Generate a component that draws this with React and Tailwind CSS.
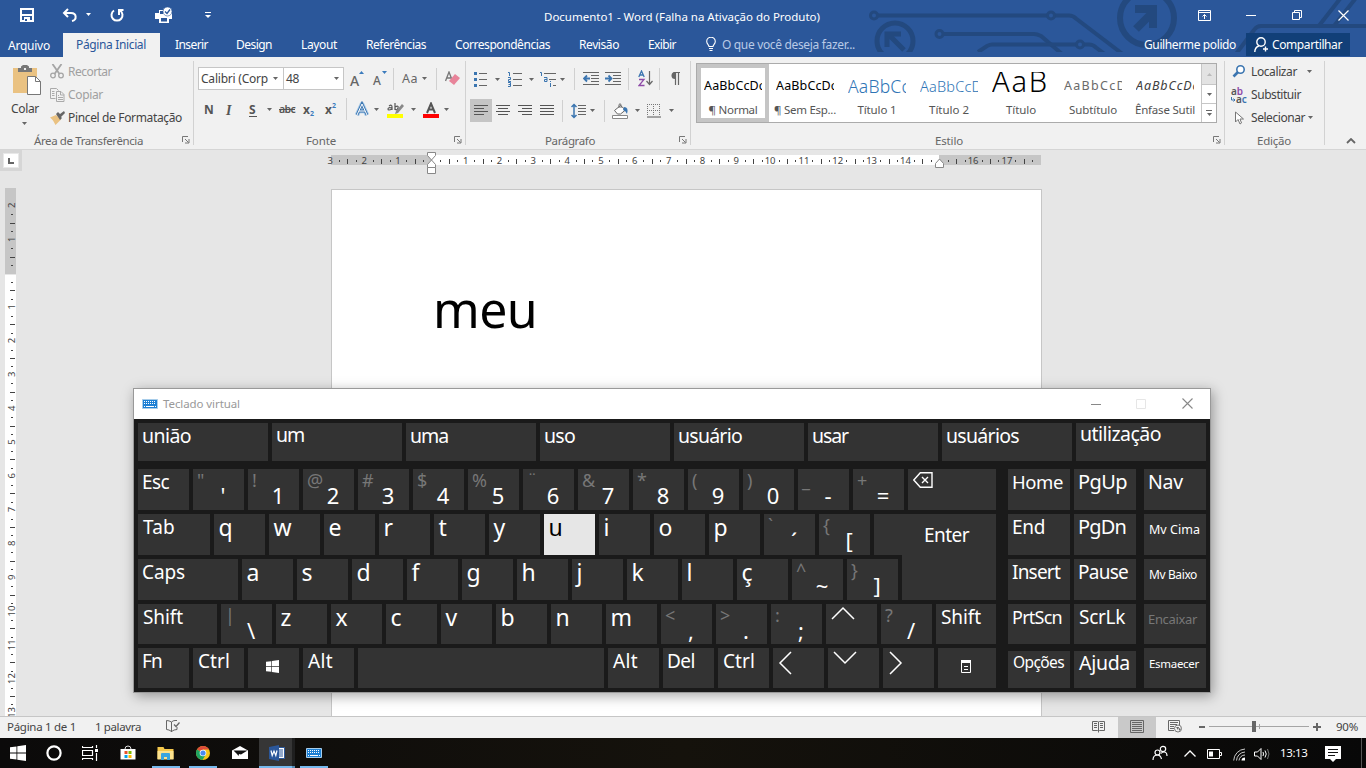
import React, { useLayoutEffect, useRef } from "react";

/* Text run tracked so that it takes up exactly `w` pixels. */
function T({ w, c = "", children }) {
  const ref = useRef(null);
  useLayoutEffect(() => {
    const el = ref.current;
    if (!w || !el) return;
    el.style.letterSpacing = "0px";
    const natural = el.getBoundingClientRect().width;
    el.style.letterSpacing = `${(w - natural) / el.textContent.length}px`;
  }, [w, children]);
  return (
    <span ref={ref} className={`inline-block shrink-0 whitespace-pre ${c}`}>
      {children}
    </span>
  );
}

const S = ({ w, h, c = "", children }) => (
  <svg width={w} height={h} viewBox={`0 0 ${w} ${h}`} fill="none" className={`block shrink-0 ${c}`}>
    {children}
  </svg>
);

const Dn = ({ c = "", f = "#666" }) => (
  <S w={5} h={3} c={c}>
    <path d="M0 0h5L2.500 3z" fill={f} />
  </S>
);
const Sep = ({ c = "" }) => <div className={`w-px h-[22px] shrink-0 bg-[#d0d0d0] ${c}`} />;
const Launcher = ({ c = "" }) => (
  <S w={8} h={8} c={c}>
    <path d="M.5 6V.5H6M3 3l3.500 3.500M7 3v4H3" stroke="#777" />
  </S>
);

/* ---------- title bar and tabs ---------- */
function Circuit() {
  return (
    <svg width="498" height="52" viewBox="868 0 498 52" fill="none" stroke="#23497f" strokeWidth="4" className="absolute left-[868px] top-0">
      <circle cx="874" cy="15.500" r="3.500" strokeWidth="3" />
      <path d="M878 15.500h169M1055 15.500h14c3 0 5 1 7 3l46 35" />
      <circle cx="1051" cy="15.500" r="3.500" strokeWidth="3" />
      <circle cx="895" cy="41" r="18" strokeWidth="5" />
      <path d="M904 50l-15-15M887 47V34h14" strokeWidth="5" />
      <circle cx="939.500" cy="34" r="3.500" strokeWidth="3" />
      <path d="M943 34h91c3 0 5 1 7 2l21 18" />
      <path d="M978 52l9-6c2-1 3-1.500 5-1.500h85M1084 44.500h5c3 0 5 1 7 3l8 6" />
      <circle cx="1080" cy="44.500" r="3.500" strokeWidth="3" />
      <circle cx="1147" cy="18" r="27" strokeWidth="6" />
      <path d="M1136 29l18-18M1135 9h18v19" strokeWidth="8" />
      <path d="M1236 54l18-24c2-3 4-4 7-4h105M1318 27l25-32M1334 26l25-32" />
    </svg>
  );
}

const TABS = [
  ["Inserir", 33, "ml-[15px]"],
  ["Design", 36, "ml-[28px]"],
  ["Layout", 36, "ml-[29px]"],
  ["Referências", 60, "ml-[29px]"],
  ["Correspondências", 95, "ml-[29px]"],
  ["Revisão", 40, "ml-[29px]"],
  ["Exibir", 28, "ml-[29px]"],
];

function Header() {
  return (
    <header className="relative h-[57px] shrink-0 bg-[#2b579a] text-white text-[12px]">
      <Circuit />
      <div className="relative flex h-[33px] items-center">
        <S w={14} h={14} c="ml-[20px] -mt-[3px]">
          <path d="M1 1h12v12H1z" stroke="#fff" strokeWidth="2" />
          <path d="M1 6h12v2H1zM4 9h6v5H4z" fill="#fff" />
          <path d="M5 11h2v2H5z" fill="#2b579a" />
        </S>
        <S w={16} h={14} c="ml-[28px] -mt-[3px]">
          <path d="M6 1L2 5l4 4M2 5h7c6 0 6 7 1 8" stroke="#fff" strokeWidth="2" />
        </S>
        <Dn f="#fff" c="ml-[8px] -mt-[4px]" />
        <S w={14} h={14} c="ml-[19px] -mt-[3px]">
          <path d="M4 2.500A5.500 5.500 0 1 0 10 2.500M9 7V2h4.500" stroke="#fff" strokeWidth="2" />
        </S>
        <S w={18} h={17} c="ml-[31px] -mt-[3px]">
          <path d="M0 6h4v-3h4v3h9v6h-3v4H4v-4H0z" fill="#fff" />
          <path d="M6 11h6v3.500H6zM5 4h3v3H5z" fill="#2b579a" />
          <circle cx="12.500" cy="4.500" r="4.500" fill="#fff" stroke="#2b579a" strokeWidth=".6" />
          <path d="M10 4.500l2 2 3-4" stroke="#2b579a" strokeWidth="1.300" />
        </S>
        <S w={6} h={7} c="ml-[32px] -mt-[2px]">
          <path d="M0 .5h6" stroke="#fff" />
          <path d="M0 3h6L3 6z" fill="#fff" />
        </S>
        <T w={276} c="ml-[333px] text-[11.500px]">Documento1 - Word (Falha na Ativação do Produto)</T>
        <S w={13} h={11} c="ml-[378px] -mt-[3px]">
          <path d="M.5 .5h12v10H.5zM.5 2.500h12M6.500 9V4.500M4.500 6.500l2-2 2 2" stroke="#fff" />
        </S>
        <S w={10} h={1} c="ml-[35px] -mt-[2px]"><path d="M0 .5h10" stroke="#fff" /></S>
        <S w={10} h={10} c="ml-[36px] -mt-[3px]">
          <path d="M.5 2.500h7v7h-7zM2.500 2V.5h7v7H8" stroke="#fff" />
        </S>
        <S w={11} h={11} c="ml-[36px] -mt-[2px]"><path d="M.5 .5l10 10M10.500 .5l-10 10" stroke="#fff" strokeWidth="1.200" /></S>
      </div>
      <div className="relative flex h-[24px] items-center">
        <T w={42} c="ml-[8px] mt-[2px]">Arquivo</T>
        <div className="ml-[13px] flex h-[24px] w-[97px] items-center bg-[#f1f1f1] pl-[13px] text-[#2b579a]">
          <T w={70}>Página Inicial</T>
        </div>
        {TABS.map(([t, w, c]) => <T key={t} w={w} c={c}>{t}</T>)}
        <S w={10} h={14} c="ml-[30px] -mt-[2px]">
          <path d="M3 9.500C3 8 .7 7 .7 4.500a4.200 4.200 0 0 1 8.600 0C9.300 7 7 8 7 9.500zM3 11.500h4M3.500 13.500h3" stroke="#fff" strokeWidth="1.100" />
        </S>
        <T w={133} c="ml-[6px] text-[#b9cae6]">O que você deseja fazer...</T>
        <T w={92} c="ml-[289px]">Guilherme polido</T>
        <div className="ml-[10px] mb-px flex h-[23px] w-[104px] items-center bg-[#113f78] pl-[8px]">
          <S w={14} h={16}>
            <circle cx="7" cy="5" r="4.200" stroke="#fff" strokeWidth="1.400" />
            <path d="M.8 15c0-3 1.500-5 4-6M9 12h5M11.500 9.500v5" stroke="#fff" strokeWidth="1.400" />
          </S>
          <T w={70} c="ml-[4px] mt-px">Compartilhar</T>
        </div>
      </div>
    </header>
  );
}

/* ---------- ribbon ---------- */
const Label = ({ pl, w, lp, children }) => (
  <div className="flex h-[18px] items-center">
    <T w={w} c={`${pl} text-[11.500px] leading-[16px] mt-px text-[#666]`}>{children}</T>
    {lp && <Launcher c={lp} />}
  </div>
);
const Rule = () => <div className="mt-[4px] h-[84px] w-px shrink-0 bg-[#d2d2d2]" />;

function Clipboard() {
  return (
    <section className="flex w-[193px] flex-col">
      <div className="flex h-[75px]">
        <div className="w-[50px] shrink-0 pl-[11px] pt-[8px]">
          <S w={30} h={30} c="ml-[2px]">
            <path d="M0 3h24v25H0z" fill="#eac282" />
            <path d="M5 3h3V1.500L10 0h4l2 1.500V3h3v4H5z" fill="#777" />
            <path d="M11 3h2v2h-2z" fill="#eee" />
            <path d="M14.500 11.500h8l5 5v13h-13z" fill="#fff" stroke="#777" />
            <path d="M22.500 11.500v5h5" stroke="#777" />
          </S>
          <T w={28} c="-mt-[2px] text-[12px] leading-[20px] text-[#444]">Colar</T>
          <Dn c="ml-[11px] mt-[3px]" />
        </div>
        <div className="flex flex-col pt-[3px] text-[12px] leading-[23px]">
          <div className="flex h-[23px] items-center text-[#a0a0a0]">
            <S w={14} h={15} c="mr-[4px]">
              <path d="M2.500 0l7 10M11.500 0l-7 10" stroke="#a5a5a5" strokeWidth="1.800" />
              <circle cx="3" cy="11.500" r="2.300" stroke="#a5a5a5" strokeWidth="1.300" />
              <circle cx="11" cy="11.500" r="2.300" stroke="#a5a5a5" strokeWidth="1.300" />
            </S>
            <T w={44}>Recortar</T>
          </div>
          <div className="flex h-[23px] items-center text-[#a0a0a0]">
            <S w={15} h={14} c="mr-[3px]">
              <path d="M5.500 10.500H.5V.5h6L8.500 2.500M2 3.500h2.500M2 5.500h2.500M2 7.500h2.500M6.500 3.500h4.500l3 3v7H6.500zM10.500 3.500v3.500h3.500M8 7.500h1M8 9.500h5M8 11.500h5" stroke="#aaa" />
            </S>
            <T w={35}>Copiar</T>
          </div>
          <div className="flex h-[23px] items-center text-[#444]">
            <S w={15} h={14} c="mr-[3px]">
              <path d="M0 6.500L6 4l5 4.500-5.500 5.500C4 11 3 9 0 6.500z" fill="#eac282" />
              <path d="M6 3l2-2 2 2 4-3 1 2-4 4 1 1-2 2z" fill="#666" />
            </S>
            <T w={114}>Pincel de Formatação</T>
          </div>
        </div>
      </div>
      <Label pl="ml-[34px]" w={109} lp="ml-[39px]">Área de Transferência</Label>
    </section>
  );
}

function FontGroup() {
  return (
    <section className="flex w-[271px] flex-col">
      <div className="flex h-[34px] items-end pl-[4px] text-[#666]">
        <div className="flex h-[23px] w-[86px] items-center border border-[#c6c6c6] bg-white pl-[2px]">
          <T w={67} c="text-[12px] text-[#444]">Calibri (Corp</T>
          <Dn c="ml-[5px]" />
        </div>
        <div className="flex h-[23px] w-[60px] items-center border border-l-0 border-[#c6c6c6] bg-white pl-[2px]">
          <T w={13} c="text-[12px] text-[#444]">48</T>
          <Dn c="ml-[35px]" />
        </div>
        <div className="flex h-[23px] items-center">
          <T w={9} c="ml-[6px] mt-[4px] text-[14px] font-medium">A</T>
          <Dn c="mb-[12px] rotate-180" f="#3b7bbd" />
          <T w={8} c="ml-[9px] mt-[5px] text-[12px] font-medium">A</T>
          <Dn c="mb-[12px] ml-[1px]" f="#3b7bbd" />
          <Sep c="ml-[6px]" />
          <T w={16} c="ml-[8px] text-[12.500px]">Aa</T>
          <Dn c="ml-[4px]" />
          <Sep c="ml-[9px]" />
          <S w={15} h={15} c="ml-[8px] -mt-px">
            <path d="M.5 10L4 1l3.500 9M1.500 7h5" stroke="#777" strokeWidth="1.300" />
            <path d="M10 3l5 4-6 7-5-4z" fill="#e8849a" />
          </S>
        </div>
      </div>
      <div className="mt-[8px] flex h-[22px] items-center text-[#555]">
        <T w={9} c="ml-[10px] mt-[2px] text-[12px] font-bold">N</T>
        <T w={7} c="ml-[13px] mt-[2px] font-['Liberation_Serif'] text-[14px] font-bold italic">I</T>
        <T w={8} c="ml-[16px] mt-[2px] text-[12px] font-bold underline underline-offset-2">S</T>
        <Dn c="ml-[10px]" />
        <T w={16} c="ml-[7px] mt-px text-[10.500px] font-semibold line-through">abc</T>
        <T w={7} c="ml-[8px] mt-px text-[12px] font-bold">x</T>
        <T w={5} c="mt-[9px] text-[7px] font-bold text-[#3b7bbd]">2</T>
        <T w={7} c="ml-[10px] mt-px text-[12px] font-bold">x</T>
        <T w={5} c="-mt-[7px] text-[7px] font-bold text-[#3b7bbd]">2</T>
        <Sep c="ml-[9px]" />
        <S w={16} h={16} c="ml-[7px] -mt-px">
          <path d="M3 14L8 3l5 11M5 10h6" stroke="#a9cbe9" strokeWidth="4.500" strokeLinejoin="round" />
          <path d="M3 14L8 3l5 11M5 10h6" stroke="#3b75b0" strokeWidth="2.800" />
          <path d="M3 14L8 3l5 11M5 10h6" stroke="#fff" strokeWidth="1" />
        </S>
        <Dn c="ml-[4px]" />
        <S w={17} h={16} c="ml-[8px] mt-px">
          <path d="M2 4q3-2 3 1v3M5 6q-4-1-4 1t4 0M8 1v7M8 5q4-2 3 1t-3 1" stroke="#555" strokeWidth="1.200" />
          <path d="M15 2L9 9l-1 3 3-1 6-7z" fill="#888" />
          <path d="M0 12h16v4H0z" fill="#ff0" />
        </S>
        <Dn c="ml-[7px]" />
        <S w={16} h={16} c="ml-[7px] mt-px">
          <path d="M4 11L8 1.500 12 11M5.500 7.500h5" stroke="#555" strokeWidth="2" />
          <path d="M0 12h16v4H0z" fill="red" />
        </S>
        <Dn c="ml-[5px]" />
      </div>
      <div className="h-[11px]" />
      <Label pl="ml-[112px]" w={30} lp="ml-[118px]">Fonte</Label>
    </section>
  );
}

const LINES = {
  left: "M0 .5h14M0 3.500h10M0 6.500h14M0 9.500h10",
  center: "M0 .5h14M2 3.500h10M0 6.500h14M2 9.500h10",
  right: "M0 .5h14M4 3.500h10M0 6.500h14M4 9.500h10",
  full: "M0 .5h14M0 3.500h14M0 6.500h14M0 9.500h14",
};
const Align = ({ k, c = "" }) => (
  <S w={14} h={11} c={c}><path d={LINES[k]} stroke="#555" /></S>
);
const Indent = ({ out, c }) => (
  <S w={16} h={13} c={c}>
    <path d="M0 .5h16M8 3.500h8M8 6.500h8M8 9.500h8M0 12.500h16" stroke="#666" />
    <path d={out ? "M7 6.500H1.500M4 3.500l-3 3 3 3" : "M0 6.500h6M3.500 3.500l3 3-3 3"} stroke="#3b75b0" strokeWidth="1.800" />
  </S>
);

function Paragraph() {
  return (
    <section className="flex w-[224px] flex-col">
      <div className="mt-[11px] flex h-[22px] items-center">
        <S w={13} h={16} c="ml-[8px] -mt-px">
          <path d="M0 1h3v3H0zM0 7h3v3H0zM0 13h3v3H0z" fill="#3b75b0" />
          <path d="M5 2.500h8M5 8.500h8M5 14.500h8" stroke="#666" />
        </S>
        <Dn c="ml-[8px]" />
        <S w={14} h={16} c="ml-[8px] -mt-px">
          <path d="M0 1.500h1.500V5M0 6.500h2.500v2H.5v2H3M0 11.500h2.500v4H0M.5 13.500h2" stroke="#3b75b0" />
          <path d="M5 2.500h9M5 8.500h9M5 14.500h9" stroke="#666" />
        </S>
        <Dn c="ml-[7px]" />
        <S w={16} h={16} c="ml-[6px] -mt-px">
          <path d="M0 1.500h1.500V5M4 6.500h3v4H4.500v-2H7M10.500 10v1M10.500 12v4" stroke="#3b75b0" />
          <path d="M4 2.500h12M9 8.500h7M13 14.500h3" stroke="#666" />
        </S>
        <Dn c="ml-[4px]" />
        <Sep c="ml-[9px]" />
        <Indent out c="ml-[8px] -mt-[2px]" />
        <Indent c="ml-[6px] -mt-[2px]" />
        <Sep c="ml-[7px]" />
        <S w={15} h={17} c="ml-[9px] -mt-px">
          <path d="M.8 7L3.500 1l2.700 6M1.500 5h4" stroke="#3b75b0" strokeWidth="1.300" />
          <path d="M1 9.500h5L1 15.500h5.500" stroke="#8e4ba8" strokeWidth="1.300" />
          <path d="M11.500 1v13M8.500 11l3 3.500 3-3.500" stroke="#666" strokeWidth="1.200" />
        </S>
        <Sep c="ml-[6px]" />
        <S w={10} h={13} c="ml-[10px] -mt-px">
          <path d="M3.500 .5H10M5.500 0v13M8.500 0v13" stroke="#666" strokeWidth="1.200" />
          <path d="M5 0a3.500 3.500 0 0 0 0 7z" fill="#666" />
        </S>
      </div>
      <div className="mt-[9px] flex h-[23px] items-center">
        <div className="ml-[4px] flex h-[23px] w-[22px] items-center justify-center bg-[#c5c5c5]">
          <Align k="left" />
        </div>
        <Align k="center" c="ml-[4px]" />
        <Align k="right" c="ml-[8px]" />
        <Align k="full" c="ml-[8px]" />
        <Sep c="ml-[8px]" />
        <S w={15} h={16} c="ml-[8px]">
          <path d="M3 1v14M.5 4L3 1.500 5.500 4M.5 12L3 14.500 5.500 12" stroke="#3b75b0" strokeWidth="1.500" />
          <path d="M7 2.500h8M7 5.500h8M7 8.500h8M7 11.500h8" stroke="#666" />
        </S>
        <Dn c="ml-[4px]" />
        <Sep c="ml-[9px]" />
        <S w={17} h={16} c="ml-[7px]">
          <path d="M2.500 7.500l6-5 5 4.500-5 4H5.500zM7 5V1.500q1-1.500 2 0v3.500" stroke="#666" fill="#fff" />
          <path d="M12 4q5 0 3 7-1-3-4-4z" fill="#3b75b0" />
          <path d="M.5 12.500h15v3H.5z" fill="#fff" stroke="#888" />
        </S>
        <Dn c="ml-[6px]" />
        <S w={14} h={14} c="ml-[7px]">
          <path d="M.5 0v12M6.500 0v12M12.500 0v12M0 .5h13M0 6.500h13" stroke="#777" strokeDasharray="1 1" />
          <path d="M0 13h14" stroke="#555" />
        </S>
        <Dn c="ml-[8px]" />
      </div>
      <div className="h-[10px]" />
      <Label pl="ml-[79px]" w={50} lp="ml-[84px]">Parágrafo</Label>
    </section>
  );
}

const STYLES = [
  ["AaBbCcDc", 61, "text-[12.500px] text-black", "¶ Normal", 49],
  ["AaBbCcDc", 61, "text-[12.500px] text-black", "¶ Sem Esp...", 62],
  ["AaBbCc", 62, "text-[17.500px] font-light text-[#2e74b5]", "Título 1", 39],
  ["AaBbCcD", 62, "text-[14.500px] font-light text-[#2e74b5]", "Título 2", 40],
  ["AaB", 57, "text-[29px] font-light text-black", "Título", 30],
  ["AaBbCcD", 63, "text-[12.500px] text-[#6a6a6a]", "Subtítulo", 48],
  ["AaBbCcDc", 63, "text-[12.500px] italic text-[#404040]", "Ênfase Sutil", 60],
];

function StylesGroup() {
  return (
    <section className="flex w-[533px] flex-col">
      <div className="ml-[5px] mt-[6px] flex h-[60px] w-[521px] border border-[#ababab] bg-white">
        {STYLES.map(([s, sw, c, l, lw], i) => (
          <div key={l} className={`flex w-[72px] shrink-0 flex-col items-center border-4 ${i === 0 ? "border-[#c5c5c5]" : "border-transparent"}`}>
            <div className="mt-[4px] flex h-[26px] w-[58px] shrink-0 items-center overflow-hidden">
              <T w={sw} c={`${c} ${s === "AaB" ? "-mt-[9px]" : "mt-[2px]"} leading-[26px]`}>{s}</T>
            </div>
            <T w={lw} c="mt-[4px] text-[11.500px] leading-[16px] text-[#555]">{l}</T>
          </div>
        ))}
        <div className="flex flex-1 flex-col border-l border-[#c6c6c6]">
          <div className="flex h-[20px] items-center justify-center bg-[#e3e3e3]"><Dn c="rotate-180" f="#bbb" /></div>
          <div className="flex h-[20px] items-center justify-center border-y border-[#c6c6c6]"><Dn /></div>
          <div className="flex flex-1 flex-col items-center justify-center gap-[2px]"><div className="h-px w-[6px] bg-[#666]" /><Dn /></div>
        </div>
      </div>
      <div className="h-[9px]" />
      <Label pl="ml-[244px]" w={28} lp="ml-[250px]">Estilo</Label>
    </section>
  );
}

function Editing() {
  return (
    <section className="flex w-[99px] flex-col text-[12px] text-[#444]">
      <div className="flex h-[75px] flex-col pl-[7px] pt-[3px]">
        <div className="flex h-[23px] items-center">
          <S w={14} h={13} c="mr-[5px]">
            <circle cx="8.500" cy="4.500" r="3.700" stroke="#3b75b0" strokeWidth="1.600" fill="#fff" />
            <path d="M6 7l-4.500 4.500" stroke="#3b75b0" strokeWidth="2.600" />
          </S>
          <T w={46}>Localizar</T>
          <Dn c="ml-[10px]" />
        </div>
        <div className="flex h-[23px] items-center">
          <div className="-ml-[1px] mr-[3px] flex w-[17px] flex-col text-[10px] font-semibold leading-[8px]">
            <span className="text-[#555]">a<span className="text-[#8e4ba8]">b</span></span>
            <span className="flex items-center gap-px whitespace-nowrap text-[#555]">
              <S w={4} h={5} c="mt-[2px]"><path d="M.5 0v3H4M2.500 1.500L4 3 2.500 4.500" stroke="#3b75b0" /></S>
              <span>a<span className="text-[#3b75b0]">c</span></span>
            </span>
          </div>
          <T w={50}>Substituir</T>
        </div>
        <div className="flex h-[23px] items-center">
          <S w={14} h={14} c="mr-[5px]">
            <path d="M3.500 1v10l2.500-2.500 2 4.500 1.500-1-1.500-4h3.500z" stroke="#777" fill="#fff" />
          </S>
          <T w={54}>Selecionar</T>
          <Dn c="ml-[3px]" />
        </div>
      </div>
      <Label pl="ml-[32px]" w={34}>Edição</Label>
    </section>
  );
}

/* ---------- document area ---------- */
const CM = 33.83;
function HRuler() {
  const z = 100.8;
  const parts = [];
  for (let i = -3; i <= 17; i++) {
    const x = z + i * CM;
    if (i !== 0 && i !== 15)
      parts.push(<text key={"n" + i} x={x} y="8.500" textAnchor="middle" className="text-[9.500px]">{Math.abs(i)}</text>);
    [0.25, 0.5, 0.75].forEach((f) => {
      const tx = Math.round(x + f * CM);
      const mid = f === 0.5;
      if (tx < 708) parts.push(<rect key={i + "t" + f} x={tx} y={mid ? 4 : 5} width="1" height={mid ? 5 : 2} />);
    });
  }
  return (
    <svg width="720" height="22" viewBox="-5 -2 720 22" fill="#444" className="block max-w-none shrink-0 overflow-visible">
      <rect x="0" y="0" width="101" height="10" fill="#c6c6c6" />
      <rect x="101" y="0" width="507" height="10" fill="#fff" />
      <rect x="608" y="0" width="102" height="10" fill="#c6c6c6" />
      {parts}
      <path d="M96.500 -2.500h8v3l-4 4.500 4 4.500v3h-8v-3l4-4.500-4-4.500z" fill="#fff" stroke="#888" />
      <path d="M96.500 12.500h8v6h-8z" fill="#fff" stroke="#888" />
      <path d="M604.500 12.500v-4l4-4.500 4 4.500v4z" fill="#fff" stroke="#888" />
    </svg>
  );
}

function VRuler() {
  const parts = [];
  for (let i = -2; i <= 13; i++) {
    const y = 85.5 + i * 33.8;
    if (i !== 0)
      parts.push(<text key={"n" + i} x="0" y="0" transform={`translate(10 ${y - 0.5}) rotate(-90)`} textAnchor="middle" className="text-[9.500px]">{Math.abs(i)}</text>);
    [0.25, 0.5, 0.75].forEach((f) => {
      const ty = Math.round(y + f * CM);
      const mid = f === 0.5;
      parts.push(<rect key={i + "t" + f} x={mid ? 5 : 6} y={ty} width={mid ? 5 : 2} height="1" />);
    });
  }
  return (
    <svg width="12" height="528" viewBox="0 0 12 528" fill="#444" className="ml-[5px] mt-[17px] block">
      <rect width="11" height="86" fill="#c6c6c6" />
      <rect y="87" width="11" height="441" fill="#fff" />
      {parts}
    </svg>
  );
}

function Document() {
  return (
    <main className="flex h-[566px] shrink-0 overflow-hidden bg-[#e6e6e6]">
      <div className="flex w-[326px] shrink-0 flex-col">
        <div className="flex h-[21px] w-[22px] items-center justify-center bg-[#d6d6d6]">
          <div className="flex h-[15px] w-[16px] items-center justify-center border border-[#e8e8e8] bg-white">
            <S w={6} h={6}><path d="M1 0v5h5" stroke="#666" strokeWidth="2" /></S>
          </div>
        </div>
        <VRuler />
      </div>
      <div className="flex flex-col pt-[3px]">
        <HRuler />
        <div className="ml-[5px] mt-[14px] h-[540px] w-[711px] shrink-0 border border-[#c6c6c6] bg-white pl-[101px] pt-[83px]">
          <T w={104} c="text-[50px] leading-[72px] text-black">meu</T>
        </div>
      </div>
    </main>
  );
}

/* ---------- status bar ---------- */
function Status() {
  return (
    <footer className="flex h-[22px] shrink-0 items-center border-t border-[#c6c6c6] bg-[#f1f1f1] text-[11.500px] text-[#444]">
      <T w={69} c="ml-[7px] -mt-px">Página 1 de 1</T>
      <T w={46} c="ml-[19px] -mt-px">1 palavra</T>
      <S w={14} h={13} c="ml-[25px] -mt-[2px]">
        <path d="M5.500 2v10M5.500 2Q3 .5.500 .5v9Q3 9.500 5.500 11.500Q8 9.500 11 9.500V7M5.500 2Q7 .5 9 .5h2" stroke="#666" />
        <path d="M8 4.500l2 2 3.500-4" stroke="#666" strokeWidth="1.300" />
      </S>
      <S w={14} h={13} c="ml-[912px] -mt-[3px]">
        <path d="M6.500 1.500v11M.5 1.500h5l1 1 1-1h5v9h-5l-1 1-1-1h-5zM2 3.500h3M2 5.500h3M2 7.500h3M8 3.500h3M8 5.500h3M8 7.500h3" stroke="#666" />
      </S>
      <div className="ml-[12px] flex h-[21px] w-[38px] items-center justify-center bg-[#c9c9c9]">
        <S w={14} h={13} c="-mt-[2px]"><path d="M.5 .5h13v12H.5zM2 2.500h10M2 4.500h10M2 6.500h10M2 8.500h10M2 10.500h10" stroke="#666" /></S>
      </div>
      <S w={14} h={13} c="ml-[12px] -mt-[3px]">
        <path d="M6 10.500H.5V.5h11V5M2 2.500h8M2 4.500h7M2 6.500h4M2 8.500h4" stroke="#666" />
        <circle cx="10" cy="8.500" r="3.500" fill="#f1f1f1" stroke="#777" />
        <path d="M8 7l3 0-1 3zM11 8l2 1-2 2z" fill="#666" />
      </S>
      <div className="ml-[17px] -mt-px h-[2px] w-[6px] bg-[#666]" />
      <div className="-mt-[2px] ml-[4px] flex h-[11px] w-[100px] items-center">
        <div className="h-px w-[43px] bg-[#a5a5a5]" />
        <div className="h-[11px] w-[4px] bg-[#666]" />
        <div className="h-px w-[3px] bg-[#a5a5a5]" />
        <div className="h-[5px] w-px bg-[#a5a5a5]" />
        <div className="h-px flex-1 bg-[#a5a5a5]" />
      </div>
      <S w={8} h={8} c="ml-[4px] -mt-px"><path d="M0 4h8M4 0v8" stroke="#666" strokeWidth="2" /></S>
      <T w={22} c="-mt-px ml-[15px]">90%</T>
    </footer>
  );
}

/* ---------- taskbar ---------- */
const Osk = ({ w = 16, h = 10, c = "" }) => (
  <svg width={w} height={h} viewBox="0 0 16 10" fill="none" className={`block shrink-0 ${c}`}>
    <path d="M.5 .5h15v9H.5z" fill="#1c7fd4" stroke="#a8cdea" />
    <path d="M2 2.500h12M2 4.500h12" stroke="#fff" strokeDasharray="1 1" />
    <path d="M2 7.500h1M4 7.500h8M13 7.500h1" stroke="#fff" />
  </svg>
);
const Slot = ({ w, line, bg = "", children }) => (
  <div className={`flex h-[30px] shrink-0 flex-col items-center ${w} ${bg}`}>
    <div className="flex h-[28px] items-center pt-[2px]">{children}</div>
    <div className={`h-[2px] ${line || ""}`} />
  </div>
);

const WinLogo = ({ s }) => (
  <svg width={s} height={s} viewBox="0 0 16 16" fill="#fff" className="block">
    <path d="M0 2.300l6.500-.9v6.100H0zM7.300 1.300L16 0v7.500H7.300zM0 8.400h6.500v6.200L0 13.700zM7.300 8.400H16V16l-8.700-1.200z" />
  </svg>
);

function Taskbar() {
  return (
    <footer className="flex h-[30px] shrink-0 items-center bg-gradient-to-r from-[#0b0a0a] via-[#15120c] to-[#080808]">
      <Slot w="w-[36px]"><WinLogo s={16} /></Slot>
      <Slot w="w-[36px]"><S w={16} h={16}><circle cx="8" cy="8" r="6.600" stroke="#fff" strokeWidth="2.200" /></S></Slot>
      <Slot w="w-[37px]">
        <S w={16} h={16} c="-ml-px">
          <path d="M.5 1v1.500h10V1M.5 15v-1.500h10V15M.5 5.500h10v5H.5zM14.500 0v3M14.500 8v8" stroke="#fff" strokeWidth="1.200" />
          <path d="M13 4h3v3h-3z" fill="#fff" />
        </S>
      </Slot>
      <Slot w="w-[38px]">
        <S w={16} h={16}>
          <path d="M.5 4h15v10.500h-15z" fill="#fff" />
          <path d="M5 4Q5 1 8 1t3 3" stroke="#ddd" />
          <path d="M4.500 6H7.500v3H4.500z" fill="#e8532b" /><path d="M8.500 6h3v3h-3z" fill="#7fba00" />
          <path d="M4.500 10h3v3h-3z" fill="#00a4ef" /><path d="M8.500 10h3v3h-3z" fill="#ffb900" />
        </S>
      </Slot>
      <Slot w="w-[37px]" line="w-[28px] bg-[#76b9ed]">
        <S w={17} h={15}>
          <path d="M.5 1h6l1 2h9v10H.5z" fill="#f5c84c" /><path d="M.5 5h16v8.500H.5z" fill="#fde28e" />
          <path d="M4 14V8q0-1 1-1h7q1 0 1 1v6h-3v-3H7v3z" fill="#3aa5e0" />
        </S>
      </Slot>
      <Slot w="w-[37px]" line="w-[28px] bg-[#76b9ed]">
        <S w={14} h={14}>
          <circle cx="7" cy="7" r="7" fill="#f7c61c" />
          <path d="M7 7L1 3.500A7 7 0 0 1 13.100 3.600H7z" fill="#dd4b39" />
          <path d="M1 3.500A7 7 0 0 0 6.500 14L9.500 9 7 7z" fill="#1da462" />
          <circle cx="7" cy="7" r="3.300" fill="#fff" /><circle cx="7" cy="7" r="2.600" fill="#4a8af4" />
        </S>
      </Slot>
      <Slot w="w-[38px]">
        <S w={16} h={14}>
          <path d="M0 4.500L8 0l8 4.500v8.500H0z" fill="#fff" />
          <path d="M1.500 4.500h14L9 8.500l-2-.5-.5 2L5 8z" fill="#111" />
        </S>
      </Slot>
      <Slot w="w-[33px]" bg="bg-[#363636]" line="w-[33px] bg-[#76b9ed]">
        <S w={16} h={16} c="ml-[3px]">
          <path d="M9 2.500h6.500v11H9z" fill="#fff" stroke="#2b579a" />
          <path d="M10 5h4M10 7h4M10 9h4M10 11h4" stroke="#2b579a" />
          <path d="M0 2l10-2v16L0 14z" fill="#2b579a" />
          <path d="M2 5.500l1.200 5L5 6l1.800 4.500L8 5.500" stroke="#fff" strokeWidth="1.200" />
        </S>
      </Slot>
      <Slot w="w-[3px]" bg="bg-[#1f1f1f]" line="w-[3px] bg-[#568bb4]" />
      <Slot w="w-[38px]" line="w-[28px] bg-[#76b9ed]"><Osk /></Slot>
      <S w={16} h={16} c="ml-[819px]">
        <circle cx="5.500" cy="7.500" r="2.500" stroke="#fff" strokeWidth="1.200" />
        <circle cx="11" cy="4" r="2.700" stroke="#fff" strokeWidth="1.200" />
        <path d="M1 15q0-5 4.500-5 3 0 4 4M9 8.500q1-1.500 3-1.500 3 0 3 4" stroke="#fff" strokeWidth="1.200" />
      </S>
      <S w={12} h={7} c="ml-[16px]"><path d="M.5 6.500L6 1l5.500 5.500" stroke="#fff" strokeWidth="1.300" /></S>
      <S w={15} h={10} c="ml-[11px] mt-px"><path d="M.5 .5h12v9H.5zM13 3.500h1.500v3H13" stroke="#fff" /><path d="M2 2.500h4v5H2z" fill="#fff" /></S>
      <S w={13} h={13} c="ml-[11px] mt-[2px]">
        <path d="M.7 12.500A12 12 0 0 1 12 1M3.500 12.500A9 9 0 0 1 12 4M6 12.500A6 6 0 0 1 12 7" stroke="#ccc" />
        <path d="M8.500 12.500q0-3 3.500-3v3z" fill="#fff" />
      </S>
      <S w={17} h={14} c="ml-[8px] mt-px">
        <path d="M.5 5h3L7 1.500v11L3.500 9h-3z" stroke="#fff" />
        <path d="M9 5q1 2 0 4M11 3.500q2.500 3.500 0 7" stroke="#fff" /><path d="M13.500 2q3 5 0 10" stroke="#777" />
      </S>
      <T w={27.5} c="ml-[9px] text-[11.500px] text-white">13:13</T>
      <S w={16} h={16} c="ml-[17px] mt-[2px]">
        <path d="M0 0h16v13h-5l-3 3-3-3H0z" fill="#fff" />
        <path d="M3 3.500h10M3 6.500h10M3 9.500h7" stroke="#111" />
      </S>
      <div className="ml-[20px] h-[30px] w-px bg-[#555]" />
    </footer>
  );
}

/* ---------- on-screen keyboard ---------- */
const PREDICT = [
  ["união", 49, "mt-px"], ["um", 28, ""], ["uma", 38, "mt-px"], ["uso", 31, "mt-px"],
  ["usuário", 64, "mt-px"], ["usar", 36, "mt-px"], ["usuários", 73, "mt-px"], ["utilização", 81, "-mt-px"],
];
const K = ({ w = "w-[51px]", bg = "bg-[#333]", c = "", children }) => (
  <div className={`flex shrink-0 items-start ${bg} ${w} ${c}`}>{children}</div>
);
const Word = ({ t, n, w, s = "text-[19px]", m = "ml-[5px]", c = "" }) => (
  <K w={w}><T w={n} c={`leading-[27px] ${m} ${s} ${c}`}>{t}</T></K>
);
const L = ({ t }) => (
  <K bg={t === "u" ? "bg-[#e6e6e6]" : "bg-[#333]"}>
    <span className={`ml-[4.500px] text-[23px] leading-[27px] ${t === "u" ? "text-black" : ""}`}>{t}</span>
  </K>
);
const D = ({ a, b }) => (
  <K>
    <span className="w-[19px] shrink-0 pl-[4px] text-[18px] leading-[22px] text-[#777]">{a}</span>
    <span className="mt-[13px] w-[22px] text-center text-[22px] leading-[26px]">{b}</span>
  </K>
);
const Chev = ({ d, c }) => (
  <K><S w={24} h={24} c={c}><path d={d} stroke="#fff" strokeWidth="1.500" /></S></K>
);
const Line = ({ h = "h-[41px]", children }) => <div className={`flex gap-[4px] ${h}`}>{children}</div>;

function Keyboard() {
  const nums = [["!", "1"], ["@", "2"], ["#", "3"], ["$", "4"], ["%", "5"], ["¨", "6"], ["&", "7"], ["*", "8"], ["(", "9"], [")", "0"], ["_", "-"], ["+", "="]];
  return (
    <div className="absolute left-[133px] top-[388px] h-[305px] w-[1078px] border border-[#999] bg-[#1a1a1a] text-white shadow-[2px_3px_12px_rgba(0,0,0,0.35)]">
      <div className="flex h-[30px] items-center bg-white">
        <Osk c="ml-[8px]" />
        <T w={77} c="ml-[5px] text-[11.500px] text-[#999]">Teclado virtual</T>
        <S w={10} h={1} c="ml-[851px]"><path d="M0 .5h10" stroke="#888" /></S>
        <S w={10} h={10} c="ml-[35px] -mt-px"><path d="M.5 .5h9v9h-9z" stroke="#e6e6e6" /></S>
        <S w={11} h={11} c="ml-[36px] -mt-px"><path d="M.5 .5l10 10M10.500 .5l-10 10" stroke="#888" strokeWidth="1.100" /></S>
      </div>
      <div className="flex gap-[4px] px-[4px] pt-[4px]">
        {PREDICT.map(([t, n, c]) => (
          <div key={t} className="h-[38px] w-[130px] bg-[#333]">
            <T w={n} c={`ml-[4px] text-[19.500px] leading-[24px] ${c}`}>{t}</T>
          </div>
        ))}
      </div>
      <div className="flex px-[4px] pt-[8px]">
        <div className="flex w-[858px] flex-col gap-[4px]">
          <Line>
            <Word t="Esc" n={27} w="w-[51px]" m="ml-[4px]" />
            <D a={'"'} b="'" />
            {nums.map(([a, b]) => <D key={b} a={a} b={b} />)}
            <K w="w-[88px]">
              <S w={20} h={16} c="ml-[5px] mt-[3px]">
                <path d="M.8 8l6.500-7.200H19v14.400H7.300zM9 5l6 6M15 5l-6 6" stroke="#fff" strokeWidth="1.400" />
              </S>
            </K>
          </Line>
          <Line>
            <Word t="Tab" n={32} w="w-[72px]" />
            {[..."qwertyuiop"].map((t) => <L key={t} t={t} />)}
            <D a="`" b="´" />
            <D a="{" b="[" />
            <K w="w-[122px]"><T w={45} c="ml-[50px] mt-[8px] text-[19px] leading-[27px]">Enter</T></K>
          </Line>
          <Line>
            <Word t="Caps" n={43} w="w-[100px]" m="ml-[4px]" />
            {[..."asdfghjklç"].map((t) => <L key={t} t={t} />)}
            <D a="^" b="~" />
            <D a="}" b="]" />
            <K w="w-[94px]" c="-mt-[4px]" />
          </Line>
          <Line h="h-[40px]">
            <Word t="Shift" n={40} w="w-[79px]" />
            <D a="|" b="\" />
            {[..."zxcvbnm"].map((t) => <L key={t} t={t} />)}
            <D a="<" b="," />
            <D a=">" b="." />
            <D a=":" b=";" />
            <Chev d="M1 13L12 2l11 11" c="ml-[5px] mt-[2px]" />
            <D a="?" b="/" />
            <Word t="Shift" n={40} w="w-[60px]" />
          </Line>
          <Line h="h-[40px]">
            <Word t="Fn" n={20} w="w-[51px]" m="ml-[4px]" />
            <Word t="Ctrl" n={32} w="w-[51px]" />
            <K><div className="ml-[18px] mt-[12px]"><WinLogo s={13} /></div></K>
            <Word t="Alt" n={25} w="w-[51px]" />
            <K w="w-[246px]" />
            <Word t="Alt" n={25} w="w-[51px]" />
            <Word t="Del" n={28} w="w-[51px]" m="ml-[4px]" />
            <Word t="Ctrl" n={32} w="w-[51px]" />
            <Chev d="M13 1L2 12l11 11" c="ml-[5px] mt-[3px]" />
            <Chev d="M1 1l11 11L23 1" c="ml-[5px] mt-[3px]" />
            <Chev d="M2 1l11 11L2 23" c="ml-[5px] mt-[3px]" />
            <K w="w-[58px]">
              <S w={10} h={13} c="ml-[23px] mt-[12px]">
                <path d="M.5 .5h9v12h-9zM0 2.500h10M3 6.500h4M3 9.500h4" stroke="#fff" />
                <path d="M0 0h10v3H0z" fill="#fff" />
              </S>
            </K>
          </Line>
        </div>
        <div className="ml-[12px] flex w-[128px] flex-col gap-[4px]">
          <Line><Word t="Home" n={51} w="w-[62px]" s="text-[18.500px]" m="ml-[4px]" c="-mt-px" /><Word t="PgUp" n={49} w="w-[62px]" s="text-[20px]" m="ml-[4px]" c="-mt-px" /></Line>
          <Line><Word t="End" n={33} w="w-[62px]" m="ml-[4px]" /><Word t="PgDn" n={48} w="w-[62px]" s="text-[20px]" m="ml-[4px]" c="-mt-px" /></Line>
          <Line><Word t="Insert" n={48} w="w-[62px]" m="ml-[4px]" /><Word t="Pause" n={50} w="w-[62px]" m="ml-[4px]" /></Line>
          <Line h="h-[40px]"><Word t="PrtScn" n={50} w="w-[62px]" s="text-[18px]" m="ml-[4px]" /><Word t="ScrLk" n={46} w="w-[62px]" /></Line>
          <Line h="h-[37px] mt-[3px]"><Word t="Opções" n={51} w="w-[62px]" s="text-[15.500px]" c="-mt-[2px]" /><Word t="Ajuda" n={51} w="w-[62px]" s="text-[19.500px]" c="-mt-[2px]" /></Line>
        </div>
        <div className="ml-[8px] flex w-[62px] flex-col gap-[4px]">
          <Line><Word t="Nav" n={35} w="w-[62px]" s="text-[19.500px]" m="ml-[4px]" c="-mt-px" /></Line>
          <Line><Word t="Mv Cima" n={51} w="w-[62px]" s="text-[12.500px]" c="mt-[2px]" /></Line>
          <Line><Word t="Mv Baixo" n={48} w="w-[62px]" s="text-[12px]" c="mt-[2px]" /></Line>
          <Line h="h-[40px]"><Word t="Encaixar" n={49} w="w-[62px]" s="text-[13px]" m="ml-[4px]" c="mt-[2px] text-[#777]" /></Line>
          <Line h="h-[40px]"><Word t="Esmaecer" n={50} w="w-[62px]" s="text-[11.500px]" c="mt-[2px]" /></Line>
        </div>
      </div>
    </div>
  );
}

export default function App() {
  return (
    <div className="relative flex h-[768px] w-[1366px] flex-col overflow-hidden bg-[#e6e6e6] font-['Noto_Sans','Open_Sans',sans-serif]">
      <Header />
      <div className="flex h-[93px] shrink-0 border-b border-[#d5d5d5] bg-[#f1f1f1]">
        <Clipboard />
        <Rule />
        <FontGroup />
        <Rule />
        <Paragraph />
        <Rule />
        <StylesGroup />
        <Rule />
        <Editing />
        <Rule />
        <S w={10} h={6} c="ml-[21px] mt-[81px]"><path d="M1 5l4-4 4 4" stroke="#666" strokeWidth="1.800" /></S>
      </div>
      <Document />
      <Status />
      <Taskbar />
      <Keyboard />
    </div>
  );
}
